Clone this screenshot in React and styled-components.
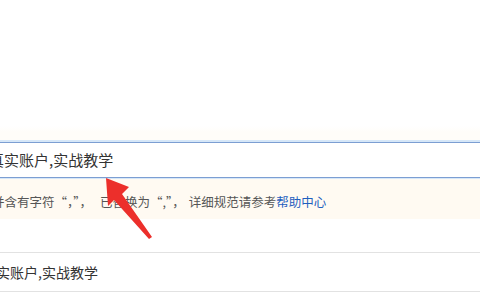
import React from 'react';
import styled, { createGlobalStyle } from 'styled-components';

const GlobalStyle = createGlobalStyle`
  html, body {
    margin: 0;
    padding: 0;
    background: #fff;
  }
  body {
    font-family: "Noto Sans CJK SC", "Noto Sans", "Liberation Sans", sans-serif;
    overflow: hidden;
  }
`;

const Page = styled.div`
  position: relative;
  width: 480px;
  height: 300px;
  padding-top: 142px;
  box-sizing: border-box;
  overflow: hidden;
  background: linear-gradient(#fff 0, #fff 126px, #fffdf9 132px, #fffdf9 140px, #fff 140px);
`;

const Field = styled.div`
  height: 36px;
  margin: 0 -10px 0 -20px;
  padding-left: 8px;
  box-sizing: border-box;
  border: 1px solid #7c9ed2;
  box-shadow: 0 0 0 2px #d6e7f8;
  background: #fff;
  font-size: 15px;
  line-height: 33px;
  color: #333;
  white-space: nowrap;
`;

const Hint = styled.div`
  margin: 1px -10px 0 -20px;
  padding: 14px 0 8px 12px;
  height: 40px;
  box-sizing: border-box;
  background: #fffaf2;
  font-size: 12.5px;
  line-height: 18px;
  color: #555;
  white-space: nowrap;
`;

const Gap = styled.span`
  display: inline-block;
  width: ${(p) => p.$w}px;
`;

const Link = styled.a`
  color: #1f5fbf;
  text-decoration: none;
`;

const Row = styled.div`
  margin: 33px -10px 0 -20px;
  padding-left: 2px;
  height: 40px;
  box-sizing: border-box;
  border-top: 1px solid #e2e2e2;
  border-bottom: 1px solid #e2e2e2;
  font-size: 14px;
  line-height: 38px;
  color: #333;
  white-space: nowrap;
`;

const Arrow = styled.svg`
  position: absolute;
  left: 0;
  top: 0;
  pointer-events: none;
`;

export default function App() {
  return (
    <>
      <GlobalStyle />
      <Page>
        <Field>真实账户,实战教学</Field>
        <Hint>
          并含有字符“，”，<Gap $w={8} />已替换为“,”，<Gap $w={4} />详细规范请参考<Link href="#">帮助中心</Link>
        </Hint>
        <Row>真实账户,实战教学</Row>
        <Arrow width="480" height="300" viewBox="0 0 480 300">
          <polygon
            points="106,178 129,187 122,194 152,237 149,239 114,200 108,206"
            fill="#ec2f2b"
          />
        </Arrow>
      </Page>
    </>
  );
}
